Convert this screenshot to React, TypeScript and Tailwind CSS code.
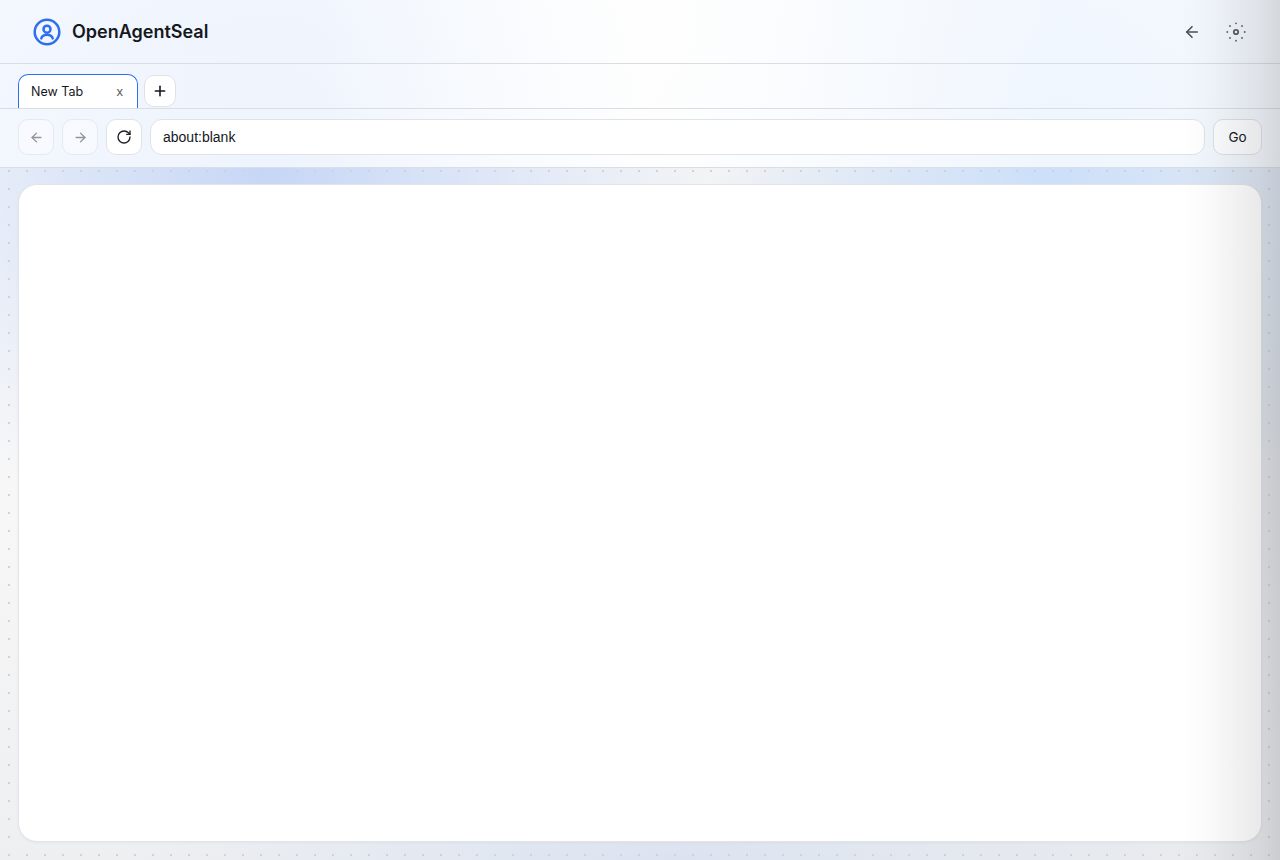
import { ArrowLeft, ArrowRight, Plus, RotateCw } from 'lucide-react'

function LogoIcon() {
  return (
    <svg viewBox="0 0 28 28" className="h-7 w-7 shrink-0 text-[#2f6fed]" fill="none" stroke="currentColor" strokeWidth="2.5" strokeLinecap="round">
      <circle cx="14" cy="14" r="12.3" />
      <circle cx="14" cy="11.2" r="3.5" />
      <path d="M8.300 20.400c.7-2.400 2.800-3.600 5.700-3.600s5 1.200 5.700 3.600" />
    </svg>
  )
}

function SunIcon() {
  return (
    <svg viewBox="0 0 20 20" className="h-5 w-5 text-[#5b5f66]" fill="none" stroke="currentColor" strokeWidth="1.8" strokeLinecap="round">
      <circle cx="10" cy="10" r="2.2" />
      <path d="M10 1.300h.01M10 18.700h.01M1.300 10h.01M18.700 10h.01M4 4h.01M16 4h.01M4 16h.01M16 16h.01" />
    </svg>
  )
}

function NavButton({ children, disabled }: { children: React.ReactNode; disabled?: boolean }) {
  return (
    <button
      className={
        disabled
          ? 'flex h-9 w-9 items-center justify-center rounded-[10px] border border-[#e6e9ef] bg-white/40 text-[#8f959e]'
          : 'flex h-9 w-9 items-center justify-center rounded-[10px] border border-[#dfe3e9] bg-white text-[#1c1f24]'
      }
    >
      {children}
    </button>
  )
}

export default function App() {
  return (
    <div className="relative flex h-[860px] w-[1280px] flex-col overflow-hidden bg-[radial-gradient(ellipse_440px_380px_at_270px_165px,#c6d6f6,transparent),radial-gradient(ellipse_340px_420px_at_1050px_150px,#cbdffa,transparent),radial-gradient(ellipse_900px_700px_at_1280px_420px,#e2e5ea,transparent),radial-gradient(ellipse_560px_130px_at_680px_860px,#dbe3f1,transparent),linear-gradient(180deg,#fafafa,#f7f7f7_60%,#eeeff1)] font-['Inter',sans-serif] text-[#15181d]">
      <header className="flex h-16 items-center justify-between border-b border-[#d9dde4] bg-[linear-gradient(90deg,rgba(244,248,255,0.85),rgba(246,250,255,0.8)_25%,rgba(255,255,255,0.9)_50%,rgba(246,250,255,0.85)_82%)] pl-[33px] pr-[34px]">
        <div className="flex items-center gap-[11px]">
          <LogoIcon />
          <span className="text-lg font-semibold">OpenAgentSeal</span>
        </div>
        <div className="flex items-center gap-[25px]">
          <ArrowLeft size={18} strokeWidth={2.200} className="text-[#4b4f56]" />
          <SunIcon />
        </div>
      </header>

      <div className="flex h-[45px] items-end gap-[6px] border-b border-[#d9dde4] bg-[linear-gradient(90deg,rgba(244,248,255,0.85),rgba(248,251,255,0.8)_25%,rgba(255,255,255,0.9)_50%,rgba(246,250,255,0.85)_82%)] pl-[18px]">
        <div className="flex h-[34px] w-[120px] items-center justify-between rounded-t-[10px] border border-b-0 border-[#2f6fed] bg-white pl-3 pr-[14px] pt-[1px] text-[12.5px]">
          <span>New Tab</span>
          <span className="font-['Liberation_Sans',sans-serif] text-[13px] text-[#555a62]">x</span>
        </div>
        <button className="mb-[1px] flex h-8 w-8 items-center justify-center rounded-[10px] border border-[#dfe3e9] bg-white">
          <Plus size={16} strokeWidth={2.400} />
        </button>
      </div>

      <div className="flex h-[59px] items-start gap-2 border-b border-[#d9dde4] bg-[linear-gradient(90deg,rgba(245,249,255,0.85),rgba(248,251,255,0.8)_25%,rgba(255,255,255,0.9)_50%,rgba(246,250,255,0.85)_82%)] pl-[18px] pr-[18px] pt-[10px]">
        <NavButton disabled>
          <ArrowLeft size={15} strokeWidth={2.200} />
        </NavButton>
        <NavButton disabled>
          <ArrowRight size={15} strokeWidth={2.200} />
        </NavButton>
        <NavButton>
          <RotateCw size={16} strokeWidth={2} />
        </NavButton>
        <div className="flex h-9 min-w-0 flex-1 items-center rounded-[12px] border border-[#dfe3e9] bg-white px-3 font-['Liberation_Sans',sans-serif] text-sm">
          about:blank
        </div>
        <button className="h-9 w-[49px] rounded-[10px] border border-[#dcdfe4] bg-white/70 text-[13.5px]">Go</button>
      </div>

      <main className="flex min-h-0 flex-1 bg-[radial-gradient(circle,#cfd2d9_1px,transparent_1.2px)] bg-[length:18px_18px] bg-[position:0_-6px] pb-[18px] pl-[18px] pr-[18px] pt-[16px]">
        <div className="flex-1 rounded-[19px] border border-[#e2e4e9] bg-white shadow-[0_1px_3px_rgba(0,0,0,0.04)]" />
      </main>

      <div className="pointer-events-none absolute inset-0 bg-[linear-gradient(270deg,rgba(0,0,0,0.13),rgba(0,0,0,0.085)_20px,rgba(0,0,0,0.02)_70px,transparent_100px)]" />
    </div>
  )
}
